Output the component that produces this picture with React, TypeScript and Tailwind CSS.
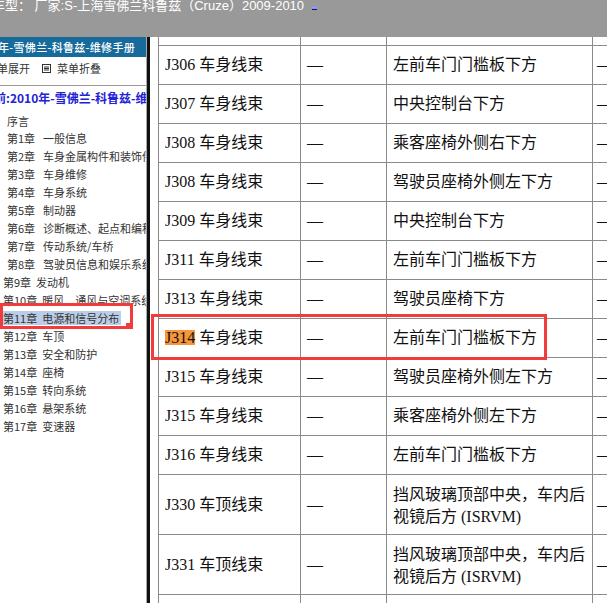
import React from "react";

type Row = {
  code: string;
  harness: string;
  place: string;
  tall?: boolean;
  marked?: boolean;
};

const rows: Row[] = [
  { code: "J306", harness: "车身线束", place: "左前车门门槛板下方" },
  { code: "J307", harness: "车身线束", place: "中央控制台下方" },
  { code: "J308", harness: "车身线束", place: "乘客座椅外侧右下方" },
  { code: "J308", harness: "车身线束", place: "驾驶员座椅外侧左下方" },
  { code: "J309", harness: "车身线束", place: "中央控制台下方" },
  { code: "J311", harness: "车身线束", place: "左前车门门槛板下方" },
  { code: "J313", harness: "车身线束", place: "驾驶员座椅下方" },
  { code: "J314", harness: "车身线束", place: "左前车门门槛板下方", marked: true },
  { code: "J315", harness: "车身线束", place: "驾驶员座椅外侧左下方" },
  { code: "J315", harness: "车身线束", place: "乘客座椅外侧左下方" },
  { code: "J316", harness: "车身线束", place: "左前车门门槛板下方" },
  { code: "J330", harness: "车顶线束", place: "挡风玻璃顶部中央，车内后视镜后方 (ISRVM)", tall: true },
  { code: "J331", harness: "车顶线束", place: "挡风玻璃顶部中央，车内后视镜后方 (ISRVM)", tall: true },
];

const chapters = [
  "第1章|一般信息",
  "第2章|车身金属构件和装饰件",
  "第3章|车身维修",
  "第4章|车身系统",
  "第5章|制动器",
  "第6章|诊断概述、起点和编程",
  "第7章|传动系统/车桥",
  "第8章|驾驶员信息和娱乐系统",
  "第9章|发动机",
  "第10章|暖风、通风与空调系统",
  "第11章|电源和信号分布",
  "第12章|车顶",
  "第13章|安全和防护",
  "第14章|座椅",
  "第15章|转向系统",
  "第16章|悬架系统",
  "第17章|变速器",
];

function MenuIcon() {
  return (
    <svg width="9" height="9" viewBox="0 0 9 9" className="shrink-0">
      <rect x="0.5" y="0.5" width="8" height="8" fill="none" stroke="#333" strokeWidth="1" />
      <line x1="2" y1="3" x2="7" y2="3" stroke="#333" strokeWidth="1" />
      <line x1="2" y1="4.5" x2="7" y2="4.5" stroke="#333" strokeWidth="1" />
      <line x1="2" y1="6" x2="7" y2="6" stroke="#333" strokeWidth="1" />
    </svg>
  );
}

function Sidebar() {
  return (
    <aside className="w-[147px] shrink-0 border-r border-[#a8a8a8] overflow-hidden whitespace-nowrap [font-family:'Noto_Sans_CJK_SC',sans-serif]">
      <div className="h-[20px] bg-[#176b9b] overflow-hidden">
        <span className="block ml-[-2px] text-[11px] leading-[20px] tracking-[0.3px] font-medium text-white">
          年-雪佛兰-科鲁兹-维修手册
        </span>
      </div>
      <div className="h-[29px] border-b border-[#9a9a9a] pt-[4px]">
        <div className="flex items-center ml-[-14px] text-[11px] leading-[14px] text-[#333]">
          <span>菜单展开</span>
          <span className="ml-[12px] flex items-center">
            <MenuIcon />
          </span>
          <span className="ml-[6px]">菜单折叠</span>
        </div>
      </div>
      <div className="mt-[3px] h-[18px] ml-[-6px] text-[12px] leading-[18px] font-bold text-[#2222d6]">
        前:2010年-雪佛兰-科鲁兹-维修手册
      </div>
      <div className="mt-[6px] h-[16px] pl-[7px] text-[11px] leading-[16px] text-[#3a3a3a]">序言</div>
      <ul className="text-[11px] text-[#333]">
        {chapters.map((c, i) => {
          const [num, title] = c.split("|");
          const nested = i < 8;
          const active = i === 10;
          return (
            <li
              key={c}
              className={`h-[18px] flex items-center ${nested ? "pl-[7px]" : "pl-[3px]"}`}
            >
              <span
                className={`inline-flex leading-[14px] ${active ? "bg-[#bccde8] pr-[2px]" : ""}`}
              >
                <span>{num}</span>
                <span className={nested ? "ml-[8px]" : "ml-[5px]"}>{title}</span>
              </span>
            </li>
          );
        })}
      </ul>
    </aside>
  );
}

function Cell({
  w,
  pl,
  children,
}: {
  w: string;
  pl: string;
  children?: React.ReactNode;
}) {
  return (
    <div className={`${w} ${pl} shrink-0 border-r border-[#8a8a8a] flex items-center`}>
      {children}
    </div>
  );
}

function Table() {
  return (
    <div className="w-[555px] border-l border-[#8a8a8a] text-[16px] text-[#111] [font-family:'Liberation_Serif','Noto_Sans_CJK_SC',serif]">
      <div className="flex h-[9px] border-b border-[#8a8a8a]">
        <Cell w="w-[142px]" pl="pl-[6px]" />
        <Cell w="w-[86px]" pl="pl-[6px]" />
        <Cell w="w-[206px]" pl="pl-[6px]" />
        <Cell w="w-[120px]" pl="pl-[4px]" />
      </div>
      {rows.map((r, i) => (
        <div
          key={i}
          className={`flex border-b border-[#8a8a8a] ${r.tall ? "h-[60px]" : "h-[39px]"}`}
        >
          <Cell w="w-[142px]" pl="pl-[6px]">
            <span className="leading-[20px]">
              <span className={r.marked ? "inline-block bg-[#f7963a] leading-[15px]" : ""}>
                {r.code}
              </span>{" "}
              {r.harness}
            </span>
          </Cell>
          <Cell w="w-[86px]" pl="pl-[6px]">
            —
          </Cell>
          <Cell w="w-[206px]" pl="pl-[6px] pr-[2px]">
            <span className={r.tall ? "leading-[22px] pt-[3px]" : "leading-[20px]"}>{r.place}</span>
          </Cell>
          <Cell w="w-[120px]" pl="pl-[4px]">
            —
          </Cell>
        </div>
      ))}
      <div className="flex h-[20px]">
        <Cell w="w-[142px]" pl="pl-[6px]" />
        <Cell w="w-[86px]" pl="pl-[6px]" />
        <Cell w="w-[206px]" pl="pl-[6px]" />
        <Cell w="w-[120px]" pl="pl-[4px]" />
      </div>
    </div>
  );
}

export default function App() {
  return (
    <div className="w-[607px] h-[603px] overflow-hidden bg-white flex flex-col">
      <header className="h-[37px] shrink-0 bg-[#999999] overflow-hidden">
        <div className="flex items-start ml-[-8px] mt-[-1px] whitespace-nowrap text-white text-[13px] leading-[14px] [font-family:'Liberation_Sans','Noto_Sans_CJK_SC',sans-serif]">
          <span>车型： 厂家:S-上海雪佛兰科鲁兹（Cruze）2009-2010</span>
          <a className="ml-[8px] mt-[8px] flex flex-col items-start gap-[1px]">
            <span className="block w-[4px] h-[1px] bg-[#8fa0ff]" />
            <span className="block w-[5px] h-[1px] bg-[#0000ee]" />
          </a>
        </div>
      </header>
      <div className="relative flex flex-1 min-h-0">
        <Sidebar />
        <div className="w-[3px] shrink-0 bg-[#111]" />
        <div className="w-[8px] shrink-0" />
        <main className="flex-1 overflow-hidden">
          <Table />
        </main>

        {/* annotation frames */}
        <div className="absolute left-0 top-[266px] w-[133px] h-[26px] border-[3px] border-[#f23c3c]" />
        <div className="absolute left-[126px] top-[286px] w-[6px] h-[6px] bg-[#f23c3c]" />
        <div className="absolute left-[151px] top-[277px] w-[396px] h-[46px] border-[3px] border-[#f23c3c]" />
      </div>
    </div>
  );
}
